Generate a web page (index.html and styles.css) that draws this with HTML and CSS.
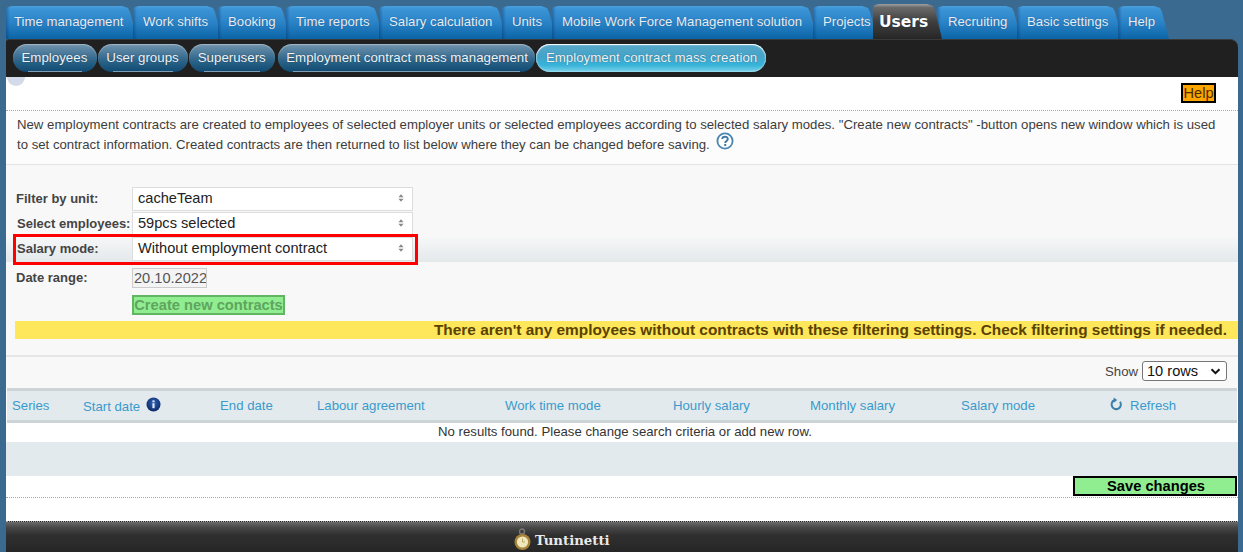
FILE: index.html
```
<!DOCTYPE html>
<html lang="en">
<head>
<meta charset="utf-8">
<title>Employment contract mass creation</title>
<link rel="stylesheet" href="styles.css">
</head>
<body>
<div class="shell">
  <nav class="tabs">
    <a class="tab t1">Time management</a>
    <a class="tab t2">Work shifts</a>
    <a class="tab t3">Booking</a>
    <a class="tab t4">Time reports</a>
    <a class="tab t5">Salary calculation</a>
    <a class="tab t6">Units</a>
    <a class="tab t7">Mobile Work Force Management solution</a>
    <a class="tab t8">Projects</a>
    <a class="tab active">Users</a>
    <a class="tab t10">Recruiting</a>
    <a class="tab t11">Basic settings</a>
    <a class="tab t12">Help</a>
  </nav>
  <nav class="subbar">
    <a class="pill">Employees</a>
    <a class="pill">User groups</a>
    <a class="pill">Superusers</a>
    <a class="pill narrow">Employment contract mass management</a>
    <a class="pill current">Employment contract mass creation</a>
  </nav>
  <main class="content">
    <span class="blob"></span>
    <div class="helprow"><a class="helpbtn">Help</a></div>
    <div class="intro">
      <p>New employment contracts are created to employees of selected employer units or selected employees according to selected salary modes. "Create new contracts" -button opens new window which is used to set contract information. Created contracts are then returned to list below where they can be changed before saving.
      <svg class="q" width="18" height="18" viewBox="0 0 18 18"><circle cx="9" cy="9" r="7.6" fill="#fff" stroke="#4a86b0" stroke-width="1.8"/><path d="M6.3 7.1C6.3 3.9 11.8 3.9 11.8 7C11.8 9 9.2 9 9.2 11" fill="none" stroke="#3f7aa6" stroke-width="1.9"/><rect x="8.2" y="12" width="2" height="2" fill="#3f7aa6"/></svg></p>
    </div>
    <section class="form">
      <div class="frow"><label>Filter by unit:</label><div class="sel"><span>cacheTeam</span><svg class="updown" width="6" height="10" viewBox="0 0 7 10"><path d="M3.5 0.5L6.5 4H.5zM3.5 9.5L.5 6H6.5z" fill="#888"/></svg></div></div>
      <div class="frow"><label class="tight">Select employees:</label><div class="sel"><span>59pcs selected</span><svg class="updown" width="6" height="10" viewBox="0 0 7 10"><path d="M3.5 0.5L6.5 4H.5zM3.5 9.5L.5 6H6.5z" fill="#888"/></svg></div></div>
      <div class="frow shaded">
        <label class="tight">Salary mode:</label><div class="sel"><span>Without employment contract</span><svg class="updown" width="6" height="10" viewBox="0 0 7 10"><path d="M3.5 0.5L6.5 4H.5zM3.5 9.5L.5 6H6.5z" fill="#888"/></svg></div>
        <span class="redbox"></span>
      </div>
      <div class="frow daterow"><label>Date range:</label><div class="dateinput">20.10.2022</div></div>
      <div class="frow btnrow"><span></span><button class="create" type="button">Create new contracts</button></div>
      <div class="notice">There aren't any employees without contracts with these filtering settings. Check filtering settings if needed.</div>
    </section>
    <div class="showrow">
      <span>Show</span>
      <div class="rows"><span>10 rows</span><svg width="11" height="7" viewBox="0 0 11 7"><path d="M1.5 1.2L5.5 5.2L9.5 1.2" fill="none" stroke="#111" stroke-width="2"/></svg></div>
    </div>
    <div class="thead">
      <span>Series</span>
      <span class="start">Start date <svg class="info" width="15" height="15" viewBox="0 0 15 15"><defs><radialGradient id="ig" cx="50%" cy="40%" r="60%"><stop offset="0" stop-color="#2f62b8"/><stop offset="1" stop-color="#0b2a66"/></radialGradient></defs><circle cx="7.5" cy="7.5" r="7" fill="url(#ig)"/><rect x="6.4" y="6.2" width="2.2" height="5" fill="#dfe8f5"/><rect x="6.4" y="3.4" width="2.2" height="1.8" fill="#dfe8f5"/></svg></span>
      <span>End date</span>
      <span>Labour agreement</span>
      <span>Work time mode</span>
      <span>Hourly salary</span>
      <span>Monthly salary</span>
      <span>Salary mode</span>
      <span class="refresh"><svg class="refresh-icon" width="13" height="14" viewBox="0 0 14 14"><path d="M10.8 4.6A5 5 0 1 1 4.6 3" fill="none" stroke="#3d7fa8" stroke-width="2.2"/><path d="M4 0L7.8 2.8L4 5.6z" fill="#3d7fa8"/></svg>Refresh</span>
    </div>
    <div class="empty">No results found. Please change search criteria or add new row.</div>
    <div class="greyrow"></div>
    <div class="saverow"><button class="save" type="button">Save changes</button></div>
    <div class="spacer"></div>
  </main>
  <footer class="foot">
    <div class="brand">
      <svg width="20" height="24" viewBox="0 0 20 24"><circle cx="9" cy="3.5" r="2.5" fill="none" stroke="#777" stroke-width="1.4"/><circle cx="9.5" cy="14" r="8" fill="#a8843a"/><circle cx="9.5" cy="14" r="5.6" fill="#f1e7bb"/><path d="M9.5 10.5V14H12" fill="none" stroke="#b8a868" stroke-width="1"/></svg>
      <span>Tuntinetti</span>
    </div>
  </footer>
</div>
</body>
</html>
```
FILE: styles.css
```
* { box-sizing: border-box; }
html, body { margin: 0; padding: 0; }
body {
  background: #3a6a8f;
  font-family: "Liberation Sans", Arial, sans-serif;
  font-size: 13.2px;
  color: #333;
  height: 552px;
  overflow: hidden;
}
.shell { padding: 4px 5px 0 6px; }

.tabs { display: flex; height: 35px; align-items: flex-end; position: relative; z-index: 1; }
.tab {
  display: block;
  height: 33px;
  padding: 8px 0 0 10px;
  margin-right: -5px;
  color: #e8eef5;
  font-size: 13.2px;
  line-height: 16px;
  white-space: nowrap;
  background: linear-gradient(90deg, rgba(0,40,100,.35) 0, rgba(0,40,100,0) 4px),
              linear-gradient(#4a9fdc 0, #3b94d6 10%, #2a83c6 50%, #0a64a6 100%);
  text-shadow: 0 0 1px rgba(0,40,90,.5);
  clip-path: polygon(0 3px, 2px 1px, 6px 0, calc(100% - 16px) 0, calc(100% - 10px) 2px, calc(100% - 8px) 6px, calc(100% - 1px) 100%, 0 100%);
}
.t1 { width: 132px; padding-left: 8px; }
.t2 { width: 90px; }
.t3 { width: 73px; }
.t4 { width: 98px; }
.t5 { width: 128px; }
.t6 { width: 55px; }
.t7 { width: 266px; }
.t8 { width: 65px; }
.tab.active {
  width: 70px;
  height: 35px;
  padding: 10px 0 0 6px;
  margin-right: -6px;
  background: linear-gradient(#a0a0a0 0, #6a6a6a 10%, #3f3f3f 50%, #262626 100%);
  color: #fff;
  font-family: "DejaVu Sans", sans-serif;
  font-weight: 700;
  font-size: 15.5px;
  position: relative;
  z-index: 2;
}
.t10 { width: 85px; padding-left: 11px; }
.t11 { width: 106px; }
.t12 { width: 52px; margin-right: 0; }

.subbar {
  height: 38px;
  background: #202020;
  border-top: 1px solid #3a3a3a;
  border-radius: 3px 8px 0 0;
  display: flex;
  gap: 1px;
  padding: 4px 0 0 7px;
  position: relative;
}
.pill {
  position: relative;
  height: 28px;
  padding: 0 9.5px 0 8.5px;
  line-height: 27px;
  font-size: 13.3px;
  color: #f0f4f8;
  white-space: nowrap;
  border-radius: 14px;
  background: linear-gradient(#7295ad 0, #4e7c9c 30%, #2c6488 60%, #104a72 100%);
  box-shadow: inset 0 1px 1px rgba(255,255,255,.35);
  text-shadow: 0 0 1px rgba(0,30,60,.6);
}
.pill::after {
  content: "";
  position: absolute;
  left: 15px; right: 15px; bottom: 0;
  height: 1px;
  background: #7f9db3;
}
.pill.narrow { padding: 0 7px 0 8px; margin-left: 2px; }
.pill.current {
  padding: 0 9px 0 10px;
  background: linear-gradient(#59a9c9 0, #44a3c8 45%, #36b3d9 75%, #7cd2ea 100%);
  box-shadow: inset 0 1px 1px #fff, inset 0 0 2px #e6f6fb;
}
.pill.current::after { display: none; }

.content { background: #fff; position: relative; height: 444px; }
.blob {
  position: absolute; left: 1px; top: 0;
  width: 18px; height: 9px;
  background: #d3dbe8;
  border-radius: 0 0 9px 9px;
}
.helprow {
  height: 34px;
  padding: 6px 22px 0 0;
  display: flex;
  justify-content: flex-end;
  border-bottom: 1px dotted #aaa;
}
.helpbtn {
  width: 35px; height: 20px;
  background: #ffa500;
  border: 2px solid #000;
  color: #4a2c00;
  font-size: 14.6px;
  line-height: 17px;
  text-align: center;
}
.intro {
  height: 54px;
  background: #fcfcfc;
  border-bottom: 1px solid #e4e4e4;
}
.intro p {
  margin: 0;
  padding: 4px 12px 0 11px;
  font-size: 13.2px;
  line-height: 20px;
  color: #3c3c3c;
}
.q { vertical-align: top; margin-left: 3px; position: relative; top: -3px; }

.form {
  background: #f8f8f8;
  height: 192px;
  padding-top: 22px;
  border-bottom: 2px solid #e6e6e6;
}
.frow {
  display: grid;
  grid-template-columns: 116px 281px;
  padding-left: 10px;
  height: 25px;
  align-items: start;
  position: relative;
}
.frow label {
  font-size: 13px;
  font-weight: 700;
  color: #444;
  line-height: 23px;
  white-space: nowrap;
}
.shaded {
  background: linear-gradient(#f6f7f7, #e3e8eb);
}
.tight { padding-left: 1px; }
.sel {
  height: 24px;
  background: #fff;
  border: 1px solid #ddd;
  display: flex;
  align-items: center;
  justify-content: space-between;
  padding: 0 8px 2px 5px;
  font-size: 14.6px;
  color: #222;
}
.redbox {
  position: absolute;
  left: 7px; top: -3px;
  width: 405px; height: 31px;
  border: 3px solid #f00;
}
.daterow { height: 32px; padding-top: 6px; }
.daterow label { line-height: 20px; }
.dateinput {
  width: 75px; height: 20px;
  border: 1px solid #ccc;
  background: #f4f4f4;
  font-size: 14.6px;
  color: #555;
  line-height: 18px;
  padding-left: 1px;
  overflow: hidden;
  white-space: nowrap;
}
.btnrow { height: 26px; margin-top: 1px; }
.create {
  width: 153px; height: 20px;
  background: #90ee90;
  border: 2px solid #62b562;
  color: #5fa45f;
  font: 700 14.7px "Liberation Sans", sans-serif;
  padding: 0;
  white-space: nowrap;
}
.notice {
  margin-left: 9px;
  height: 18px;
  background: #ffe75c;
  font-size: 15.4px;
  font-weight: 700;
  color: #5a4200;
  text-align: right;
  line-height: 18px;
  padding-right: 11px;
  white-space: nowrap;
}
.showrow {
  height: 31px;
  background: #f8f8f8;
  display: flex;
  align-items: center;
  justify-content: flex-end;
  gap: 4px;
  padding: 0 11px 3px 0;
  font-size: 13.2px;
  color: #444;
}
.rows {
  width: 85px; height: 20px;
  border: 1px solid #777;
  border-radius: 3px;
  background: #fff;
  display: flex;
  align-items: center;
  justify-content: space-between;
  padding: 0 5px 0 4px;
  font-size: 14.6px;
  color: #111;
}
.thead {
  height: 35px;
  margin: 0 1px;
  background: #e2eaee;
  border-top: 3px solid #cdd4d8;
  border-bottom: 3px solid #cdd4d8;
  display: grid;
  grid-template-columns: 71px 137px 97px 188px 168px 137px 151px 149px 1fr;
  padding-left: 5px;
  align-items: center;
  font-size: 13.2px;
  color: #3b9acb;
  white-space: nowrap;
}
.start { position: relative; top: -1px; }
.info { margin-left: 2px; position: relative; top: 1px; }
.refresh { display: flex; align-items: center; gap: 7px; }
.refresh-icon { position: relative; top: -2px; }
.empty {
  height: 19px;
  padding-left: 6px;
  text-align: center;
  font-size: 13.2px;
  line-height: 18px;
  background: #fff;
  color: #333;
}
.greyrow { height: 34px; background: #e3eaed; }
.saverow {
  height: 22px;
  display: flex;
  justify-content: flex-end;
  align-items: flex-start;
  border-bottom: 1px dotted #aaa;
  padding-right: 1px;
}
.save {
  width: 164px; height: 20px;
  background: #90ee90;
  border: 2px solid #000;
  color: #000;
  font: 700 14.7px "Liberation Sans", sans-serif;
  padding: 0 0 0 2px;
}
.spacer { height: 22px; }
.foot {
  height: 31px;
  border-top: 1px dotted #aaa;
  background: linear-gradient(#6a6a6a 0, #474747 18%, #2f2f2f 45%, #262626 100%);
  overflow: hidden;
}
.brand {
  display: flex;
  align-items: center;
  gap: 2px;
  padding: 6px 0 0 507px;
  height: 30px;
}
.brand span {
  font-family: "DejaVu Serif", serif;
  font-weight: 700;
  font-size: 13.3px;
  color: #e9e9e9;
}
```
